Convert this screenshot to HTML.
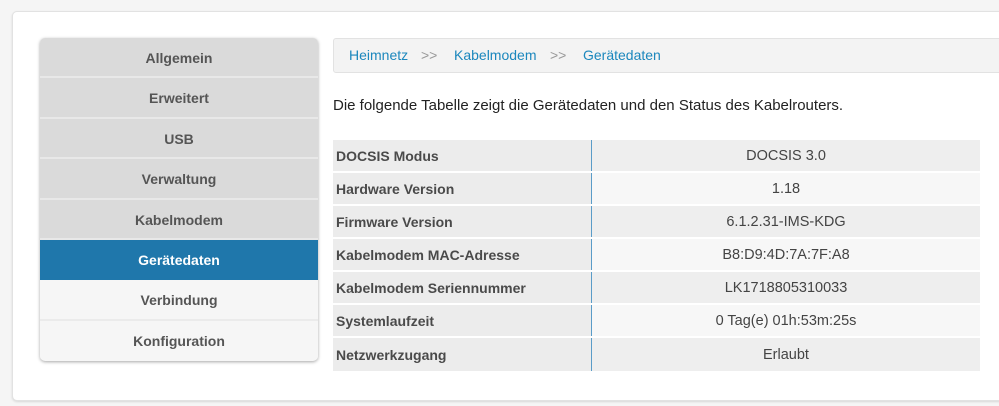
<!DOCTYPE html>
<html><head><meta charset="utf-8"><style>
body{margin:0;width:999px;height:406px;background:#f5f5f5;font-family:"Liberation Sans",Arial,sans-serif;overflow:hidden;position:relative}
.card{position:absolute;left:12px;top:11px;width:1000px;height:388px;background:#fff;border:1px solid #e2e2e2;border-radius:5px;box-shadow:0 1px 2px rgba(0,0,0,.12)}
.side{position:absolute;left:40px;top:38px;width:278px;height:323px;border-radius:5px;overflow:hidden;box-shadow:0 1px 3px rgba(0,0,0,.35);background:#f6f6f6}
.side div{height:38.4px;line-height:40px;text-align:center;font-weight:bold;font-size:14px;color:#555;background:#dadada;border-bottom:2px solid #e8e8e8}
.side div.l{background:#f6f6f6;border-bottom:2px solid #ebebeb}
.side div.a{background:#1f77ab;color:#fff;border-bottom:2px solid #1f77ab}
.side div:last-child{border-bottom:none}
.bc{position:absolute;left:333px;top:38px;width:680px;height:33px;background:#f3f3f3;border:1px solid #e2e2e2;border-radius:3px;font-size:14px;line-height:33px}
.bc span{color:#1b87bd;position:absolute}
.bc i{font-style:normal;color:#999;position:absolute}
p{position:absolute;left:333px;top:97px;margin:0;font-size:15px;color:#222}
table{position:absolute;left:333px;top:140px;width:647px;border-collapse:collapse;font-size:14px;color:#444}
td{height:31px;padding:0;border-bottom:2px solid #fff}
td.k{width:255px;padding-left:3px;font-weight:bold;background:#ececec;border-right:1px solid #5a9cc8;color:#4a4a4a}
td.v{text-align:center;background:#eeeeee;font-size:14.5px}
tr:nth-child(even) td.v{background:#f7f7f7}
tr:last-child td{border-bottom:none;height:33px}
</style></head><body>
<div class="card"></div>
<div class="side">
<div>Allgemein</div><div>Erweitert</div><div>USB</div><div>Verwaltung</div><div>Kabelmodem</div>
<div class="a">Gerätedaten</div><div class="l">Verbindung</div><div class="l">Konfiguration</div>
</div>
<div class="bc"><span style="left:15px">Heimnetz</span><i style="left:87px">&gt;&gt;</i><span style="left:120px">Kabelmodem</span><i style="left:216px">&gt;&gt;</i><span style="left:249px">Gerätedaten</span></div>
<p>Die folgende Tabelle zeigt die Gerätedaten und den Status des Kabelrouters.</p>
<table>
<tr><td class="k">DOCSIS Modus</td><td class="v">DOCSIS 3.0</td></tr>
<tr><td class="k">Hardware Version</td><td class="v">1.18</td></tr>
<tr><td class="k">Firmware Version</td><td class="v">6.1.2.31-IMS-KDG</td></tr>
<tr><td class="k">Kabelmodem MAC-Adresse</td><td class="v">B8:D9:4D:7A:7F:A8</td></tr>
<tr><td class="k">Kabelmodem Seriennummer</td><td class="v">LK1718805310033</td></tr>
<tr><td class="k">Systemlaufzeit</td><td class="v">0 Tag(e) 01h:53m:25s</td></tr>
<tr><td class="k">Netzwerkzugang</td><td class="v">Erlaubt</td></tr>
</table>
</body></html>
